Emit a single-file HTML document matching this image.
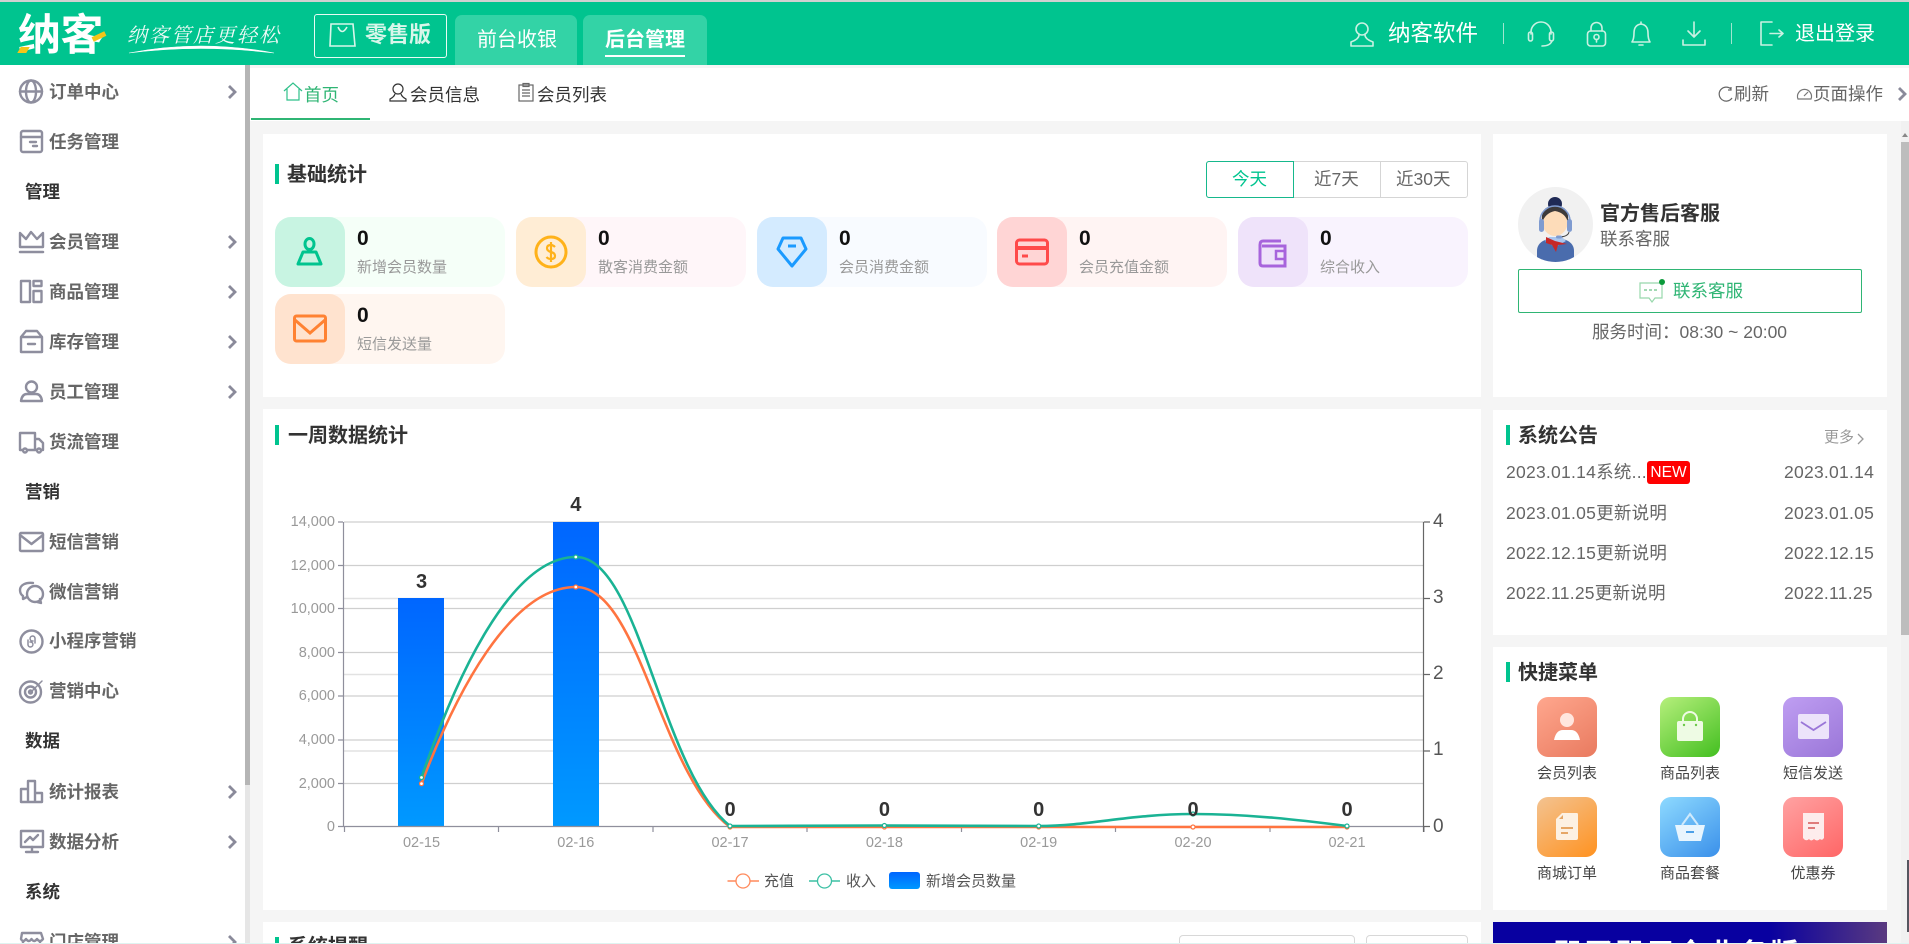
<!DOCTYPE html>
<html lang="zh-CN">
<head>
<meta charset="utf-8">
<title>纳客</title>
<style>
html,body{margin:0;padding:0;width:1909px;height:944px;overflow:hidden;background:#f5f5f5;font-family:"Liberation Sans","Noto Sans CJK SC",sans-serif}
#root{position:absolute;left:0;top:0;width:1909px;height:944px;overflow:hidden;contain:paint}
.a{position:absolute}
.t{position:absolute;white-space:nowrap;height:24px;line-height:24px}
svg{position:absolute;overflow:visible}
.side{font-size:17.5px;font-weight:700;color:#666}
.sec{font-size:17.5px;font-weight:700;color:#333;left:25px}
.h{font-size:20px;font-weight:700;color:#333}
.bar{position:absolute;width:4px;height:20px;background:#00c48f}
.panel{position:absolute;background:#fff}
.card{position:absolute;width:230px;height:70px;border-radius:16px}
.blk{position:absolute;left:0;top:0;width:70px;height:70px;border-radius:16px}
.num{font-size:21px;font-weight:700;color:#111;left:82px;top:10px}
.lab{font-size:15px;color:#999;left:82px;top:39px}
.list{font-size:17.5px;color:#666;letter-spacing:.25px}
.q{position:absolute;width:60px;height:60px;border-radius:11px}
.ql{font-size:15px;color:#444;text-align:center;width:100px}
.ic{fill:none;stroke:#8e8e9e;stroke-width:2.4;stroke-linejoin:round;stroke-linecap:round}
.ch{fill:none;stroke:#8a8a9a;stroke-width:2.8}
.hi{fill:none;stroke:#c9f1e2;stroke-width:1.6;stroke-linecap:round;stroke-linejoin:round}
</style>
</head>
<body>
<div id="root">
<!-- header -->
<div class="a" style="left:0;top:0;width:1909px;height:65px;background:#00c48f"></div>
<div class="a" style="left:0;top:0;width:1909px;height:2px;background:#d0d0d0"></div>
<div class="t" style="left:18px;top:14px;height:44px;line-height:44px;font-size:43px;font-weight:700;color:#fff;letter-spacing:-.5px">纳客</div>
<div class="a" style="left:19px;top:47px;width:9px;height:6px;background:#f5c518;transform:skewX(-30deg)"></div>
<div class="a" style="left:92px;top:34px;width:14px;height:5px;background:#f5c518;transform:rotate(-25deg)"></div>
<div class="t" style="left:127px;top:22px;font-family:'Noto Serif CJK SC',serif;font-size:20px;font-style:italic;color:#f2fbf8;letter-spacing:2px">纳客管店更轻松</div>
<svg style="left:0;top:0" width="400" height="65"><path d="M129 53Q200 39 274 53Q200 44 129 53Z" fill="#fff" stroke="#fff" stroke-width=".6"/></svg>
<div class="a" style="left:314px;top:14px;width:131px;height:42px;border:1.5px solid #e8fbf4;border-radius:3px"></div>
<svg style="left:329px;top:22px" width="28" height="26" fill="none" stroke="#d8f6ea" stroke-width="1.6"><path d="M2 2H24L26 24H1Z"/><path d="M9 5Q13 14 18 5"/></svg>
<div class="t" style="left:365px;top:23px;font-size:22px;font-weight:700;color:#d8f6ea">零售版</div>
<div class="a" style="left:455px;top:15px;width:122px;height:50px;background:#33d3a6;border-radius:7px 7px 0 0"></div>
<div class="a" style="left:583px;top:15px;width:124px;height:50px;background:#33d3a6;border-radius:7px 7px 0 0"></div>
<div class="t" style="left:477px;top:28px;font-size:20px;color:#fff">前台收银</div>
<div class="t" style="left:605px;top:28px;font-size:20px;font-weight:700;color:#fff">后台管理</div>
<div class="a" style="left:605px;top:55px;width:80px;height:2px;background:#fff"></div>
<svg style="left:1349px;top:21px" width="28" height="26" class="hi"><circle cx="13" cy="8" r="6"/><path d="M10 14Q10 18 2 21V25H24V21Q16 18 16 14"/></svg>
<div class="t" style="left:1388px;top:22px;font-size:22.5px;color:#fff">纳客软件</div>
<div class="a" style="left:1503px;top:23px;width:1px;height:21px;background:#9fe6cf"></div>
<svg style="left:1527px;top:21px" width="30" height="26" class="hi"><path d="M4 13V11A10 10 0 0 1 24 11V13"/><rect x="1.500" y="11" width="4" height="9" rx="2"/><rect x="22.500" y="11" width="4" height="9" rx="2"/><path d="M25 20Q23 25 15 25"/></svg>
<svg style="left:1586px;top:21px" width="22" height="26" class="hi"><rect x="1.500" y="10" width="18" height="15" rx="3"/><path d="M5 10V7A5.500 5.500 0 0 1 16 7V10"/><circle cx="10.500" cy="16" r="2.500"/><path d="M10.500 18.500V21"/></svg>
<svg style="left:1630px;top:21px" width="24" height="26" class="hi"><path d="M2 21Q4 18 4 12Q4 4 11 3Q18 4 18 12Q18 18 20 21Z"/><path d="M11 1V3M9 24H13"/></svg>
<svg style="left:1681px;top:21px" width="28" height="26" class="hi"><path d="M13 1V16M7 10L13 16L19 10M2 19V24H24V19"/></svg>
<div class="a" style="left:1731px;top:23px;width:1px;height:21px;background:#9fe6cf"></div>
<svg style="left:1759px;top:21px" width="28" height="26" class="hi"><path d="M13 1H2V24H13M11 12.500H24M20 9L24 12.500L20 16"/></svg>
<div class="t" style="left:1795px;top:22px;font-size:20px;color:#fff">退出登录</div>

<!-- tab bar -->
<div class="a" style="left:250px;top:68px;width:1659px;height:53px;background:#fff"></div>
<div class="a" style="left:251px;top:118px;width:119px;height:2px;background:#2fb574"></div>
<svg style="left:283px;top:82px" width="20" height="20" fill="none" stroke="#2fc08a" stroke-width="1.200"><path d="M1 9L10 1L19 9M4 7V18H16V7"/></svg>
<div class="t" style="left:304px;top:83px;font-size:17.5px;color:#2fb574">首页</div>
<svg style="left:389px;top:83px" width="20" height="20" fill="none" stroke="#333" stroke-width="1.200"><circle cx="9" cy="6" r="5"/><path d="M6 11Q5 14 1 16V18H17V16Q13 14 12 11"/></svg>
<div class="t" style="left:410px;top:83px;font-size:17.5px;color:#333">会员信息</div>
<svg style="left:518px;top:83px" width="18" height="20" fill="none" stroke="#666" stroke-width="1.200"><rect x="1" y="2" width="14" height="16"/><rect x="5" y="0.500" width="6" height="3"/><path d="M4 7H12M4 10H12M4 13H12"/></svg>
<div class="t" style="left:537px;top:83px;font-size:17.5px;color:#333">会员列表</div>
<svg style="left:1717px;top:86px" width="17" height="17" fill="none" stroke="#666" stroke-width="1.200"><path d="M14 3A7 7 0 1 0 15 12M14 1V4H11"/></svg>
<div class="t" style="left:1734px;top:82px;font-size:17.5px;color:#666">刷新</div>
<svg style="left:1796px;top:86px" width="17" height="16" fill="none" stroke="#777" stroke-width="1.200"><path d="M2 13A7 7 0 1 1 15 13ZM8 10L12 6"/></svg>
<div class="t" style="left:1813px;top:82px;font-size:17.5px;color:#666">页面操作</div>
<svg style="left:1897px;top:87px" width="10" height="14"><path class="ch" d="M2 1L8 7L2 13"/></svg>

<!-- sidebar -->
<div class="a" style="left:0;top:65px;width:245px;height:879px;background:#fff"></div>
<div class="a" style="left:245px;top:65px;width:5px;height:879px;background:#e6e6e6"></div>
<div class="a" style="left:245px;top:65px;width:5px;height:720px;background:#b5b5b5"></div>

<div class="t side" style="left:49px;top:80px">订单中心</div>
<div class="t side" style="left:49px;top:130px">任务管理</div>
<div class="t sec" style="top:180px">管理</div>
<div class="t side" style="left:49px;top:230px">会员管理</div>
<div class="t side" style="left:49px;top:280px">商品管理</div>
<div class="t side" style="left:49px;top:330px">库存管理</div>
<div class="t side" style="left:49px;top:380px">员工管理</div>
<div class="t side" style="left:49px;top:430px">货流管理</div>
<div class="t sec" style="top:480px">营销</div>
<div class="t side" style="left:49px;top:530px">短信营销</div>
<div class="t side" style="left:49px;top:580px">微信营销</div>
<div class="t side" style="left:49px;top:629px">小程序营销</div>
<div class="t side" style="left:49px;top:679px">营销中心</div>
<div class="t sec" style="top:729px">数据</div>
<div class="t side" style="left:49px;top:780px">统计报表</div>
<div class="t side" style="left:49px;top:830px">数据分析</div>
<div class="t sec" style="top:880px">系统</div>
<div class="t side" style="left:49px;top:930px">门店管理</div>

<svg style="left:0;top:0" width="245" height="944">
<g class="ic">
<g transform="translate(19,80)"><circle cx="12" cy="11.500" r="11"/><ellipse cx="12" cy="11.500" rx="5" ry="11"/><path d="M1 11.500H23"/></g>
<g transform="translate(20,130)"><rect x="1" y="1" width="21" height="21" rx="2"/><path d="M1 7H22M10 12H16M13 16H17"/></g>
<g transform="translate(19,231)"><path d="M1 16V2L7 8L12 1L18 8L24 2V16H1"/><path d="M1 21H24" stroke-width="2.500"/></g>
<g transform="translate(20,280)"><rect x="1" y="1" width="9" height="21"/><rect x="13.500" y="1" width="8" height="5"/><rect x="13.500" y="11" width="8" height="11"/></g>
<g transform="translate(20,330)"><path d="M1 7L6 1H17L22 7V22H1ZM1 7H22M8 14H15"/></g>
<g transform="translate(20,380)"><circle cx="11.500" cy="7" r="5.500"/><path d="M1 21Q2 14 7 14H16Q21 14 22 21Z"/></g>
<g transform="translate(19,432)"><path d="M4 18H1V1H16V18H8M16 7H20L24 11V18H22M16 18H18"/><circle cx="6" cy="18.500" r="2"/><circle cx="20" cy="18.500" r="2"/></g>
<g transform="translate(19,532)"><rect x="1" y="1" width="23" height="18" rx="1"/><path d="M1 3L12.500 12L24 3"/></g>
<g transform="translate(19,582)"><path d="M14 1C7 0 1 3 1 8Q1 12 4 14V17L8 15"/><circle cx="16" cy="12" r="8"/><path d="M18 20L22 21L21 17"/></g>
<g transform="translate(20,630)"><circle cx="11.500" cy="11.500" r="11"/><path d="M8 10V15A2.500 2.500 0 1 0 10 12M15 13V8A2.500 2.500 0 1 0 13 11" stroke-width="1.500"/></g>
<g transform="translate(19,680)"><circle cx="11.500" cy="12" r="10.500"/><circle cx="11.500" cy="12" r="5.500"/><circle cx="11.500" cy="12" r="1.500"/><path d="M12 12L23 1" stroke-width="1.500"/></g>
<g transform="translate(20,780)"><path d="M1 22V9H8V22M8 22V1H15V22M15 22V13H22V22ZM1 22H22"/></g>
<g transform="translate(20,830)"><rect x="1" y="1" width="22" height="16"/><path d="M5 12L10 7L13 10L18 5M12 17V21M6 22H18"/></g>
<g transform="translate(20,931)"><path d="M2 2H21L23 8Q20 12 17 8Q14 12 11.500 8Q9 12 6 8Q3 12 1 8ZM3 11V22H20V11"/></g>
</g>
<g class="ch">
<path d="M229 86L235 92L229 98"/>
<path d="M229 236L235 242L229 248"/>
<path d="M229 286L235 292L229 298"/>
<path d="M229 336L235 342L229 348"/>
<path d="M229 386L235 392L229 398"/>
<path d="M229 786L235 792L229 798"/>
<path d="M229 836L235 842L229 848"/>
<path d="M229 936L235 942L229 948"/>
</g>
</svg>

<!-- panels -->
<div class="panel" style="left:263px;top:134px;width:1218px;height:263px"></div>
<div class="panel" style="left:263px;top:409px;width:1218px;height:501px"></div>
<div class="panel" style="left:263px;top:922px;width:1218px;height:22px"></div>
<div class="panel" style="left:1493px;top:134px;width:394px;height:263px"></div>
<div class="panel" style="left:1493px;top:410px;width:394px;height:225px"></div>
<div class="panel" style="left:1493px;top:647px;width:394px;height:263px"></div>
<div class="a" style="left:1493px;top:922px;width:394px;height:22px;background:linear-gradient(90deg,#0800a0 0%,#0800a0 70%,#5a3a80 100%);overflow:hidden"><div class="t" style="left:60px;top:17px;height:30px;line-height:30px;font-size:28px;font-weight:700;color:#fff;letter-spacing:3px">即买即用全业务版</div></div>

<!-- 基础统计 -->
<div class="bar" style="left:275px;top:164px"></div>
<div class="t h" style="left:287px;top:163px">基础统计</div>
<div class="a" style="left:1206px;top:161px;width:260px;height:35px;border:1px solid #d5d5d5;border-radius:3px"></div>
<div class="a" style="left:1293px;top:162px;width:1px;height:35px;background:#d5d5d5"></div>
<div class="a" style="left:1380px;top:162px;width:1px;height:35px;background:#d5d5d5"></div>
<div class="a" style="left:1206px;top:161px;width:86px;height:35px;border:1px solid #16b88c;border-radius:3px 0 0 3px"></div>
<div class="t" style="left:1232px;top:167px;font-size:17.5px;color:#00c48f">今天</div>
<div class="t" style="left:1314px;top:167px;font-size:17.5px;color:#666">近7天</div>
<div class="t" style="left:1396px;top:167px;font-size:17.5px;color:#666">近30天</div>

<div class="card" style="left:275px;top:217px;background:#f5fff8"><div class="blk" style="background:#c8f4e2"></div><div class="t num">0</div><div class="t lab">新增会员数量</div>
<svg style="left:19px;top:20px" width="32" height="32" fill="none" stroke="#00c48f" stroke-width="3" stroke-linejoin="round"><ellipse cx="15.500" cy="7" rx="4.500" ry="5.500"/><path d="M9 15H22L27 27H4Z"/></svg></div>
<div class="card" style="left:516px;top:217px;background:#fff6f9"><div class="blk" style="background:#ffedd5"></div><div class="t num">0</div><div class="t lab">散客消费金额</div>
<svg style="left:18px;top:18px" width="34" height="34" fill="none" stroke="#ffb21a" stroke-width="3"><circle cx="17" cy="17" r="15"/><path d="M21 12Q19 10 17 10Q13 10 13 13Q13 16 17 17Q21 18 21 21Q21 24 17 24Q14 24 12.500 22M17 7V27" stroke-width="2.200"/></svg></div>
<div class="card" style="left:757px;top:217px;background:#f8fbff"><div class="blk" style="background:#d4ebff"></div><div class="t num">0</div><div class="t lab">会员消费金额</div>
<svg style="left:18px;top:18px" width="34" height="34" fill="none" stroke="#1a9aff" stroke-width="3" stroke-linejoin="round"><path d="M8 3H26L31 14L17 31L3 14Z"/><path d="M13 11H21"/></svg></div>
<div class="card" style="left:997px;top:217px;background:#fff4f3"><div class="blk" style="background:#ffd5d5"></div><div class="t num">0</div><div class="t lab">会员充值金额</div>
<svg style="left:18px;top:20px" width="34" height="30" fill="none" stroke="#ff4a4a" stroke-width="3"><rect x="1.500" y="3" width="31" height="24" rx="3"/><path d="M1.500 11H32.500" stroke-width="4"/><path d="M7 19H13"/></svg></div>
<div class="card" style="left:1238px;top:217px;background:#f9f3fe"><div class="blk" style="background:#efe3fa"></div><div class="t num">0</div><div class="t lab">综合收入</div>
<svg style="left:20px;top:22px" width="30" height="30" fill="none" stroke="#a764dc" stroke-width="3"><path d="M23 2H5Q2 2 2 6V24Q2 27 5 27H27V7H4"/><path d="M18 12H27V20H18Z" stroke-width="2.500"/></svg></div>
<div class="card" style="left:275px;top:294px;background:#fff6f0"><div class="blk" style="background:#ffe3cf"></div><div class="t num">0</div><div class="t lab">短信发送量</div>
<svg style="left:18px;top:20px" width="34" height="30" fill="none" stroke="#ff8232" stroke-width="3"><rect x="1.500" y="2" width="31" height="25" rx="2"/><path d="M2 6L17 19L32 6"/></svg></div>

<!-- 客服 -->
<svg style="left:1518px;top:187px" width="75" height="75" viewBox="0 0 75 75">
<defs><clipPath id="cc"><circle cx="37.500" cy="37.500" r="37.500"/></clipPath></defs>
<circle cx="37.500" cy="37.500" r="37.500" fill="#f1f1f1"/>
<g clip-path="url(#cc)">
<path d="M19 75V64Q19 55 30 52H45Q56 55 56 64V75Z" fill="#4a6cad"/>
<path d="M27 54L37 60L48 54L44 50H31Z" fill="#a9c6ee"/>
<circle cx="37" cy="17" r="7" fill="#1f2a55"/>
<ellipse cx="37" cy="34" rx="13" ry="15" fill="#fddcb9"/>
<path d="M24 36Q22 18 37 19Q52 18 50 36Q48 26 37 24Q27 26 24 36Z" fill="#3d3a3a"/>
<path d="M22 34A15 15 0 0 1 52 34" fill="none" stroke="#7f9bd0" stroke-width="1.500"/>
<rect x="21" y="32" width="5" height="13" rx="2.500" fill="#7f9bd0"/><rect x="49" y="32" width="5" height="13" rx="2.500" fill="#7f9bd0"/>
<path d="M51 45Q50 50 40 50" fill="none" stroke="#444" stroke-width="1"/><rect x="38" y="48.500" width="6" height="3" rx="1.500" fill="#7f9bd0"/>
<path d="M28 50L37 54L49 57L40 58L38 65L34 58L28 56Z" fill="#c62828"/>
</g></svg>
<div class="t" style="left:1600px;top:202px;font-size:20px;font-weight:700;color:#333">官方售后客服</div>
<div class="t" style="left:1600px;top:227px;font-size:17.5px;color:#666">联系客服</div>
<div class="a" style="left:1518px;top:269px;width:342px;height:42px;border:1px solid #2fb574;border-radius:2px"></div>
<svg style="left:1639px;top:278px" width="27" height="26" fill="none" stroke="#98d8ac" stroke-width="1.200"><path d="M1 5H23V20H16L13 24L10 20H1Z"/><path d="M5 12H18" stroke-dasharray="3 2" stroke="#6cc488"/><circle cx="23" cy="4" r="3" fill="#0a9a3a" stroke="none"/></svg>
<div class="t" style="left:1673px;top:279px;font-size:17.5px;color:#2fb574">联系客服</div>
<div class="t" style="left:1592px;top:320px;font-size:17.5px;color:#666">服务时间：08:30 ~ 20:00</div>

<!-- 系统公告 -->
<div class="bar" style="left:1506px;top:425px"></div>
<div class="t h" style="left:1518px;top:424px">系统公告</div>
<div class="t" style="left:1824px;top:426px;font-size:15px;color:#999">更多</div>
<svg style="left:1857px;top:433px" width="8" height="12"><path d="M1 1L6 6L1 11" fill="none" stroke="#999" stroke-width="1.300"/></svg>
<div class="t list" style="left:1506px;top:460px">2023.01.14系统...</div>
<div class="a" style="left:1647px;top:461px;width:43px;height:23px;background:#f00;border-radius:3px;color:#fff;font-size:15.500px;line-height:23px;text-align:center">NEW</div>
<div class="t list" style="left:1506px;top:501px">2023.01.05更新说明</div>
<div class="t list" style="left:1506px;top:541px">2022.12.15更新说明</div>
<div class="t list" style="left:1506px;top:581px">2022.11.25更新说明</div>
<div class="t list" style="left:1784px;top:460px">2023.01.14</div>
<div class="t list" style="left:1784px;top:501px">2023.01.05</div>
<div class="t list" style="left:1784px;top:541px">2022.12.15</div>
<div class="t list" style="left:1784px;top:581px">2022.11.25</div>

<!-- 快捷菜单 -->
<div class="bar" style="left:1506px;top:662px"></div>
<div class="t h" style="left:1518px;top:661px">快捷菜单</div>
<div class="q" style="left:1537px;top:697px;background:linear-gradient(145deg,#ffa78e,#e97a5f)"><svg width="60" height="60"><circle cx="30" cy="23" r="7" fill="#ffe6de"/><path d="M17 43Q19 33 26 33H34Q41 33 43 43Z" fill="#fff"/></svg></div>
<div class="q" style="left:1660px;top:697px;background:linear-gradient(145deg,#b6ef7c,#43bf20)"><svg width="60" height="60"><rect x="17" y="24" width="26" height="20" rx="2" fill="#eefbe4"/><path d="M23 24V22A7 7 0 0 1 37 22V24" fill="none" stroke="#eefbe4" stroke-width="2"/><circle cx="24" cy="28" r="1.200" fill="#6cc94a"/><circle cx="36" cy="28" r="1.200" fill="#6cc94a"/></svg></div>
<div class="q" style="left:1783px;top:697px;background:linear-gradient(145deg,#bf9ef2,#9a76d8)"><svg width="60" height="60"><rect x="15" y="17" width="31" height="25" rx="2" fill="#ece3fa"/><path d="M18 25L30.500 33L43 25" fill="none" stroke="#9a76d8" stroke-width="1.800"/></svg></div>
<div class="q" style="left:1537px;top:797px;background:linear-gradient(145deg,#f3c391,#ff9220)"><svg width="60" height="60"><path d="M25 16H40Q41 16 41 18V41Q41 43 39 43H21Q19 43 19 41V22Z" fill="#fdf1e2"/><path d="M22 22L26 18V22Z" fill="#e6a766"/><path d="M24 31H36M24 36H31" stroke="#e6a766" stroke-width="2"/></svg></div>
<div class="q" style="left:1660px;top:797px;background:linear-gradient(145deg,#8edaff,#3a90ea)"><svg width="60" height="60"><path d="M15 28H45L41 44H19Z" fill="#e8f5fe"/><path d="M22 28L30 17L38 28" fill="none" stroke="#cfeafc" stroke-width="2"/><path d="M26 35H34" stroke="#4ba0e8" stroke-width="2"/></svg></div>
<div class="q" style="left:1783px;top:797px;background:linear-gradient(145deg,#ffa2a2,#ff6666)"><svg width="60" height="60"><path d="M20 16H41V41Q39 44 37 42Q34 45 31 42Q28 45 26 42Q23 45 20 41Z" fill="#fdecec"/><path d="M25 26H36M25 31H32" stroke="#df7c7c" stroke-width="2"/></svg></div>
<div class="t ql" style="left:1517px;top:762px">会员列表</div>
<div class="t ql" style="left:1640px;top:762px">商品列表</div>
<div class="t ql" style="left:1763px;top:762px">短信发送</div>
<div class="t ql" style="left:1517px;top:862px">商城订单</div>
<div class="t ql" style="left:1640px;top:862px">商品套餐</div>
<div class="t ql" style="left:1763px;top:862px">优惠券</div>

<!-- 一周数据统计 -->
<div class="bar" style="left:275px;top:425px"></div>
<div class="t h" style="left:288px;top:424px">一周数据统计</div>

<svg style="left:0;top:0" width="1909" height="944" font-family="'Liberation Sans','Noto Sans CJK SC',sans-serif">
<defs><linearGradient id="bg" x1="0" y1="0" x2="0" y2="1"><stop offset="0" stop-color="#0066ff"/><stop offset="1" stop-color="#0099ff"/></linearGradient></defs>
<g stroke="#e2e2e2" stroke-width="1.500"><path d="M344 598.500H1424M344 674.500H1424M344 751H1424"/></g>
<g stroke="#cfcfcf" stroke-width="1.300"><path d="M344 522H1424M344 565.500H1424M344 608.500H1424M344 652.500H1424M344 696H1424M344 740H1424M344 783.500H1424"/></g>
<rect x="398" y="598" width="46" height="229" fill="url(#bg)"/>
<rect x="553" y="522" width="46" height="305" fill="url(#bg)"/>
<g stroke="#8f8f9c" stroke-width="1.200"><path d="M343.500 522V827M338 522H343M338 565.500H343M338 608.500H343M338 652.500H343M338 696H343M338 740H343M338 783.500H343M338 826.500H343M343 826.500H1424M344.500 826V832M498.500 826V832M653 826V832M807 826V832M961.500 826V832M1115.500 826V832M1270 826V832M1424 826V832"/></g>
<g stroke="#666" stroke-width="1.200"><path d="M1423.500 522V832M1424 522H1430M1424 598.500H1430M1424 674.500H1430M1424 751H1430M1424 826.500H1430"/></g>
<g fill="#999" font-size="14.500" text-anchor="end"><text x="335" y="526">14,000</text><text x="335" y="570">12,000</text><text x="335" y="613">10,000</text><text x="335" y="657">8,000</text><text x="335" y="700">6,000</text><text x="335" y="744">4,000</text><text x="335" y="788">2,000</text><text x="335" y="831">0</text></g>
<g fill="#555" font-size="19"><text x="1433" y="527">4</text><text x="1433" y="603">3</text><text x="1433" y="679">2</text><text x="1433" y="755">1</text><text x="1433" y="832">0</text></g>
<g fill="#999" font-size="14.500" text-anchor="middle"><text x="421.500" y="847">02-15</text><text x="575.800" y="847">02-16</text><text x="730" y="847">02-17</text><text x="884.400" y="847">02-18</text><text x="1038.700" y="847">02-19</text><text x="1193" y="847">02-20</text><text x="1347" y="847">02-21</text></g>
<path d="M421.500 783.600C455 695 510 587 575.800 587C640 587 660 775 730 827C800 827 1280 827 1347 827" fill="none" stroke="#ff7440" stroke-width="2.600"/>
<path d="M421.500 777.500C455 680 510 557 575.800 557C640 557 660 770 730 826C780 826 840 825.500 884.400 825.500C940 825.500 990 826 1038.700 826C1090 826 1130 814 1193 814C1250 814 1300 820 1347 826" fill="none" stroke="#1ab394" stroke-width="2.600"/>
<g fill="#fff" stroke="#ff7440" stroke-width="1.200"><circle cx="421.500" cy="783.600" r="2"/><circle cx="575.800" cy="587" r="2"/><circle cx="730" cy="827" r="2"/><circle cx="884.400" cy="827" r="2"/><circle cx="1038.700" cy="827" r="2"/><circle cx="1193" cy="827" r="2"/><circle cx="1347" cy="827" r="2"/></g>
<g fill="#fff" stroke="#1ab394" stroke-width="1.200"><circle cx="421.500" cy="777.500" r="2"/><circle cx="575.800" cy="557" r="2"/><circle cx="730" cy="826" r="2"/><circle cx="884.400" cy="825.500" r="2"/><circle cx="1038.700" cy="826" r="2"/><circle cx="1193" cy="814" r="2"/><circle cx="1347" cy="826" r="2"/></g>
<g fill="#333" font-size="20" font-weight="700" text-anchor="middle"><text x="421.500" y="588">3</text><text x="575.800" y="511">4</text><text x="730" y="816">0</text><text x="884.400" y="816">0</text><text x="1038.700" y="816">0</text><text x="1193" y="816">0</text><text x="1347" y="816">0</text></g>
<path d="M727.500 881H759" stroke="#ff8a5c" stroke-width="1.500"/><circle cx="743" cy="881" r="7" fill="#fff" stroke="#ff8a5c" stroke-width="1.300"/>
<path d="M809 881H840" stroke="#3cc0a4" stroke-width="1.500"/><circle cx="824.500" cy="881" r="7" fill="#fff" stroke="#3cc0a4" stroke-width="1.300"/>
<rect x="889" y="872" width="31" height="17" rx="3" fill="url(#bg)"/>
<g fill="#555" font-size="15"><text x="764" y="886">充值</text><text x="846" y="886">收入</text><text x="926" y="886">新增会员数量</text></g>
</svg>

<!-- panel 3 -->
<div class="bar" style="left:275px;top:937px"></div>
<div class="t h" style="left:288px;top:935px">系统提醒</div>
<div class="a" style="left:1179px;top:935px;width:174px;height:30px;border:1px solid #d8d8d8;border-radius:4px;background:#fff"></div>
<div class="a" style="left:1366px;top:935px;width:100px;height:30px;border:1px solid #d8d8d8;border-radius:4px;background:#fff"></div>

<!-- page scrollbar -->
<div class="a" style="left:1901px;top:121px;width:8px;height:823px;background:#f1f1f1"></div>
<div class="a" style="left:1901px;top:142px;width:8px;height:493px;background:#bdbdbd"></div>
<svg style="left:1901px;top:130px" width="8" height="10"><path d="M1 7L4 3L7 7Z" fill="#888"/></svg>
<div class="a" style="left:1907px;top:860px;width:2px;height:72px;background:#55555f"></div>
<div class="a" style="left:0;top:943px;width:1909px;height:1px;background:#dff4f1"></div>
</div>
</body>
</html>
